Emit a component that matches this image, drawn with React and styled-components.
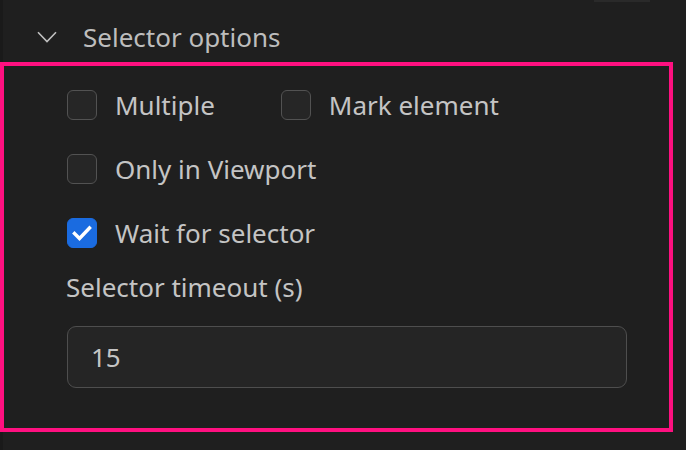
import React, { useState } from 'react'
import styled, { createGlobalStyle } from 'styled-components'

const GlobalStyle = createGlobalStyle`
   html, body {
      margin: 0;
      padding: 0;
      background: #1f1f1f;
   }
   body {
      font-family: "Noto Sans", "Open Sans", sans-serif;
      color: #cccccc;
      overflow: hidden;
   }
`

const Page = styled.div`
   width: 686px;
   height: 450px;
   overflow: hidden;
   background: linear-gradient(to right, #1a1a1a 3px, #1f1f1f 3px);
   display: flex;
   flex-direction: column;

   & > * {
      flex: none;
   }
`

const TopBar = styled.div`
   display: flex;
   justify-content: flex-end;
   padding-right: 36px;
`

const TopStub = styled.div`
   width: 56px;
   height: 2px;
   background: #2a2a2a;
`

const SectionHeader = styled.button`
   display: flex;
   align-items: center;
   gap: 26px;
   height: 60px;
   padding: 9px 0 0 37px;
   border: none;
   background: transparent;
   color: #bdbdbd;
   font: inherit;
   font-size: 26px;
   cursor: pointer;
   text-align: left;

   svg {
      flex: none;
   }
`

const Panel = styled.section`
   width: 673px;
   box-sizing: border-box;
   border: 4px solid #ff1080;
   padding: 24px 0 40px 63px;
   display: flex;
   flex-direction: column;
`

const OptionRow = styled.div`
   display: flex;
   align-items: center;
   gap: 66px;
   height: 30px;
   margin-bottom: ${({ last }) => (last ? '22px' : '34px')};
`

const Option = styled.label`
   display: flex;
   align-items: center;
   gap: 18px;
   font-size: 26px;
   color: #c4c4c4;
   cursor: pointer;
   user-select: none;
`

const Box = styled.span`
   width: 30px;
   height: 30px;
   box-sizing: border-box;
   border-radius: 6px;
   border: 1.5px solid ${({ checked }) => (checked ? '#1a6be0' : '#525252')};
   background: ${({ checked }) => (checked ? '#1a6be0' : '#262626')};
   display: grid;
   place-items: center;
   flex: none;
`

const FieldLabel = styled.div`
   font-size: 26px;
   color: #c4c4c4;
   margin: 0 0 22px -1px;
   line-height: 34px;
`

const NumberInput = styled.input`
   width: 560px;
   height: 62px;
   box-sizing: border-box;
   border: 1.5px solid #4e4e4e;
   border-radius: 9px;
   background: #252525;
   color: #c4c4c4;
   font: inherit;
   font-size: 26px;
   padding: 0 0 0 23px;
   outline: none;
`

const Footnote = styled.p`
   margin: 12px 0 0 56px;
   font-size: 26px;
   line-height: 34px;
   color: #c4c4c4;
   white-space: nowrap;
`

const Chevron = () => (
   <svg width="20" height="12" viewBox="0 0 20 12" fill="none">
      <path d="M1 1.2l9 9.3 9-9.3" stroke="#c0c0c0" strokeWidth="1.6" />
   </svg>
)

const Check = () => (
   <svg width="20" height="16" viewBox="0 0 20 16" fill="none">
      <path d="M2.5 8.5l5 5L17.5 3" stroke="#ffffff" strokeWidth="3.4" strokeLinecap="square" />
   </svg>
)

const Checkbox = ({ label, checked, onToggle }) => (
   <Option onClick={onToggle}>
      <Box checked={checked}>{checked && <Check />}</Box>
      {label}
   </Option>
)

const App = () => {
   const [opts, setOpts] = useState({ multiple: false, mark: false, viewport: false, wait: true })
   const toggle = (key) => () => setOpts({ ...opts, [key]: !opts[key] })

   return (
      <>
         <GlobalStyle />
         <Page>
            <TopBar><TopStub /></TopBar>
            <SectionHeader>
               <Chevron />
               Selector options
            </SectionHeader>
            <Panel>
               <OptionRow>
                  <Checkbox label="Multiple" checked={opts.multiple} onToggle={toggle('multiple')} />
                  <Checkbox label="Mark element" checked={opts.mark} onToggle={toggle('mark')} />
               </OptionRow>
               <OptionRow>
                  <Checkbox label="Only in Viewport" checked={opts.viewport} onToggle={toggle('viewport')} />
               </OptionRow>
               <OptionRow last>
                  <Checkbox label="Wait for selector" checked={opts.wait} onToggle={toggle('wait')} />
               </OptionRow>
               <FieldLabel>Selector timeout (s)</FieldLabel>
               <NumberInput type="text" defaultValue="15" />
            </Panel>
            <Footnote>Each selector is checked before the modifiers</Footnote>
         </Page>
      </>
   )
}

export default App
